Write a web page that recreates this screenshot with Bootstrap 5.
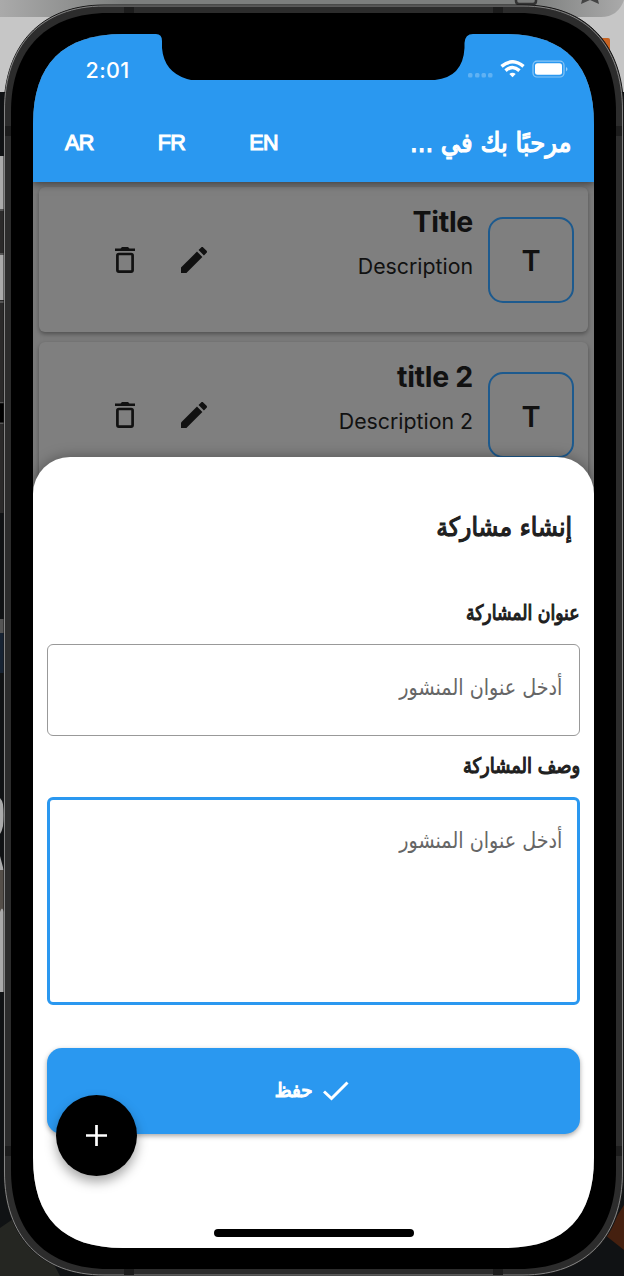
<!DOCTYPE html>
<html lang="ar" dir="rtl">
<head>
<meta charset="utf-8">
<meta name="viewport" content="width=device-width, initial-scale=1">
<title>إنشاء مشاركة</title>
<link href="https://cdn.jsdelivr.net/npm/bootstrap@5.3.0/dist/css/bootstrap.min.css" rel="stylesheet">
<style>
:root{--blue:#2a98f0}
body{width:624px;height:1276px;overflow:hidden;background:#101214;font-family:Inter,"DejaVu Sans",sans-serif;color:#111}
svg{display:block;flex:none}
.device{width:624px;height:1276px;padding:34px 30px 28px 33px}
.device-art{position:absolute;left:0;top:0}
.screen{width:561px;height:1214px;background:#7a7a7a;clip-path:url(#screenShape)}
.app-top{height:148px;background:var(--blue);box-shadow:0 2px 8px rgba(0,0,0,.5);z-index:1}
.notch{position:absolute;left:118px;top:0;z-index:3}
.status{height:72px;padding:0 25px 0 52.500px}
.clock{font-size:21.500px;font-weight:500;letter-spacing:.4px;line-height:72px}
.app-row{padding:17px 22px 0 32px}
.lang{font:21.500px/30px "Liberation Sans",sans-serif;-webkit-text-stroke:1.100px #fff;letter-spacing:-.6px}
.ar{font-family:"DejaVu Sans",sans-serif;white-space:nowrap;-webkit-text-stroke:1.200px currentColor}
.ar span,.field span,span.ar{display:inline-block;transform-origin:right center}
.brand-text{font-size:27px;line-height:40px}
.brand-text span{transform:scaleX(.9)}
.post{width:549px;height:145px;background:#7f7f7f;border-radius:6px;box-shadow:0 2px 4px rgba(0,0,0,.35);margin:0 6px 10.400px;padding-right:14px}
.avatar-box{width:86px;height:86px;border:2px solid #1d5a8e;border-radius:15px;font-size:29px;font-weight:600;margin-top:30px;padding-top:2px}
.post-copy{flex:1;padding:17.500px 15px 0 0;text-align:right}
.post-title{font-size:28.500px;line-height:34px;font-weight:700;letter-spacing:-.3px}
.post-desc{font-size:21.300px;line-height:28px;margin-top:13.500px}
.post-tools{order:3;gap:46px;padding:60px 0 0 76px;width:280px;flex:none}
.sheet{position:absolute;left:0;right:0;top:423px;bottom:0;background:#fff;border-radius:37px 37px 0 0;padding:0 14px;box-shadow:0 0 14px rgba(0,0,0,.35);z-index:2;color:#202020}
.sheet-title{font-size:26px;line-height:40px;padding:50px 8px 0 0}
.sheet-title span{transform:scaleX(.905)}
.field-label{font-size:21px;line-height:30px;margin-top:15px}
.field-label span{transform:scaleX(.855)}
.sheet-title + .field-label{margin-top:51px}
.sheet-title + .field-label span{transform:scaleX(.82)}
.field{border:1.500px solid #999;border-radius:6px;height:92px;padding:0 17px;font:22px/86px "DejaVu Sans",sans-serif;color:#666;background:#fff;margin-top:16px}
.field span{transform:scaleX(.87)}
.field-active{border:3px solid var(--blue);height:208px;padding:0 15px;line-height:82px}
.save{height:86px;border-radius:15px;background:var(--blue)!important;border:0;color:#fff!important;box-shadow:0 2px 5px rgba(0,0,0,.35);margin-top:43px;padding:0 7px 3px 0}
.save svg{margin-top:3px}
.save .ar{font-size:20px;margin-right:11px;transform:scaleX(.91)}
.fab{position:absolute;left:23px;top:1061px;width:81px;height:81px;background:#000!important;box-shadow:0 6px 12px rgba(0,0,0,.35);z-index:4}
.home-bar{position:absolute;left:181px;top:1195px;width:200px;height:7.500px;border-radius:4px;background:#000;z-index:4}
</style>
</head>
<body>
<div class="device position-relative">
<svg class="device-art" width="624" height="1276" viewBox="0 0 624 1276" aria-hidden="true">
<defs>
<linearGradient id="g" x2="1"><stop stop-color="#aaa"/><stop offset=".2" stop-color="#7c7e7d"/><stop offset=".85" stop-color="#7c7e7d"/><stop offset="1" stop-color="#aaa"/></linearGradient>
<clipPath id="screenShape"><path d="M0 90C0 30 30 0 90 0H471C531 0 561 30 561 90V1124C561 1184 531 1214 471 1214H90C30 1214 0 1184 0 1124Z"/></clipPath>
</defs>
<rect width="624" height="92" fill="#c6c6c6"/><path d="M0 0H624Q618 17 601 17H0Z" fill="url(#g)"/>
<path d="M516 0V1Q516 4 519 4H533Q536 4 536 1V0" fill="none" stroke="#333" stroke-width="2.500"/><path d="M582 0L581 4L590 0L599 4L598 0Z" fill="#444"/>
<rect x="600" y="38" width="10" height="15" rx="2" fill="#c86423"/>
<path d="M0 156h6v53H0zM0 255h6v45H0z" fill="#aaa"/><path d="M0 209h6v46H0zM0 300h6v213H0z" fill="#2b2a2a"/><path d="M0 209h5v2H0zM0 253h5v2H0zM0 301h5v2H0zM0 402h5v1H0zM0 422h5v2H0z" fill="#555"/><path d="M0 403.500h4v19H0z" fill="#000"/>
<path d="M0 619h4v14H0z" fill="#555"/><path d="M0 633h4v40H0z" fill="#172333"/><path d="M0 798Q4 802 4 815Q4 828 0 834ZM0 856l4 15v121H0z" fill="#aaa"/><path d="M0 870h4v42Q2 905 0 912z" fill="#554f49"/>
<path d="M0 1228L26 1210L60 1276H0Z" fill="#252622"/><path d="M624 1205L605 1235L624 1250Z" fill="#45200f"/>
<path d="M620 132h4v182h-4z" fill="#777"/><path d="M620 314h4v800h-4z" fill="#444"/>
<path d="M4 110C4 45 41 5 104 5H523C587 5 623.500 45 623.500 110V1172C623.500 1237 587 1275.500 523 1275.500H104C41 1275.500 4 1237 4 1172Z" fill="#2c2c2c" stroke="#161616"/>
<path d="M4.500 110C4.500 46 41 6 104 6H523C586 6 622.500 46 622.500 110V1172C622.500 1236 586 1275 523 1275H104C41 1275 4.500 1236 4.500 1172Z" fill="none" stroke="#858585"/>
<path d="M124 7h10v6h-10zM493 7h10v6h-10zM124 1269h10v6h-10zM493 1269h10v6h-10zM5 126h6v10H5zM616 126h6v10h-6zM5 1146h6v10H5zM616 1146h6v10h-6z" fill="#1c1c1c"/>
<path d="M11 112C11 48 48 13 108 13H519C580 13 616 48 616 112V1170C616 1234 580 1269 519 1269H108C48 1269 11 1234 11 1170Z"/>
</svg>
<main class="screen position-relative">
<header class="app-top position-relative text-white">
<div class="status d-flex justify-content-between align-items-center" dir="ltr">
<span class="clock">2:01</span>
<svg width="101" height="20" viewBox="0 0 101 20" fill="#fff"><g opacity=".25"><rect y="13" width="4.500" height="4.500" rx="1.500"/><rect x="7" y="13" width="4.500" height="4.500" rx="1.500"/><rect x="13.500" y="13" width="4.500" height="4.500" rx="1.500"/><rect x="20" y="13" width="4.500" height="4.500" rx="1.500"/></g><g fill="none" stroke="#fff" stroke-width="3.500"><path d="M33.500 6.400Q44.500-2.800 55.500 6.400M37.500 10.600Q44.500 4.500 51.500 10.600"/></g><path d="M41.300 14Q44.500 11.400 47.700 14L44.500 17.300Z"/><rect x="65" y="1.200" width="31" height="15.800" rx="4" fill="none" stroke="#fff" stroke-opacity=".45" stroke-width="1.200"/><rect x="67" y="3.200" width="27" height="11.600" rx="2.500"/><path d="M98 7Q101 9 98 11.500Z" opacity=".5"/></svg>
</div>
<div class="app-row d-flex justify-content-between align-items-center" dir="ltr">
<nav class="d-flex" style="gap:64px"><span class="lang">AR</span><span class="lang">FR</span><span class="lang">EN</span></nav>
<div class="ar brand-text" dir="rtl"><span>مرحبًا بك في ...</span></div>
</div>
</header>
<svg class="notch" width="326" height="46" viewBox="0 0 326 46"><path d="M0 0H5Q11 0 11 7V14Q13 38 36 45L40 46H284Q312 43 313.500 14V9Q314 0 322 0Z"/></svg>
<section style="padding-top:5px">
<article class="post d-flex">
<div class="avatar-box d-flex align-items-center justify-content-center">T</div>
<div class="post-copy" dir="ltr"><div class="post-title">Title</div><div class="post-desc">Description</div></div>
<div class="post-tools d-flex align-items-start" dir="ltr"><svg width="20" height="26" fill="#111"><path d="M0 1.500H5.500L7 0H13L14.500 1.500H20V4H0Z"/><rect x="2.400" y="7" width="15.200" height="17.600" rx="1.500" fill="none" stroke="#111" stroke-width="2.700"/></svg><svg width="26" height="26" viewBox="3 3 18 18" fill="#111"><path d="M3 17.250V21H6.750L17.810 9.940L14.060 6.190Z"/><path d="M20.710 7.040C21.100 6.650 21.100 6.020 20.710 5.630L18.370 3.290C17.980 2.900 17.350 2.900 16.960 3.290L15.130 5.120L18.880 8.870Z"/></svg></div>
</article>
<article class="post d-flex">
<div class="avatar-box d-flex align-items-center justify-content-center">T</div>
<div class="post-copy" dir="ltr"><div class="post-title">title 2</div><div class="post-desc">Description 2</div></div>
<div class="post-tools d-flex align-items-start" dir="ltr"><svg width="20" height="26" fill="#111"><path d="M0 1.500H5.500L7 0H13L14.500 1.500H20V4H0Z"/><rect x="2.400" y="7" width="15.200" height="17.600" rx="1.500" fill="none" stroke="#111" stroke-width="2.700"/></svg><svg width="26" height="26" viewBox="3 3 18 18" fill="#111"><path d="M3 17.250V21H6.750L17.810 9.940L14.060 6.190Z"/><path d="M20.710 7.040C21.100 6.650 21.100 6.020 20.710 5.630L18.370 3.290C17.980 2.900 17.350 2.900 16.960 3.290L15.130 5.120L18.880 8.870Z"/></svg></div>
</article>
</section>
<form class="sheet">
<h1 class="ar sheet-title mb-0 fw-normal"><span>إنشاء مشاركة</span></h1>
<div class="ar field-label"><span>عنوان المشاركة</span></div>
<div class="field"><span>أدخل عنوان المنشور</span></div>
<div class="ar field-label"><span>وصف المشاركة</span></div>
<div class="field field-active"><span>أدخل عنوان المنشور</span></div>
<button type="button" class="save btn w-100 d-flex align-items-center justify-content-center"><svg width="26" height="20" fill="none" stroke="#fff" stroke-width="3"><path d="M1 10.500L8.500 17.500L24.500 1.500"/></svg><span class="ar">حفظ</span></button>
</form>
<button class="fab btn rounded-circle p-0 d-flex align-items-center justify-content-center" aria-label="add"><svg width="21" height="21" stroke="#fff" stroke-width="2.700"><path d="M0 10.500H21M10.500 0V21"/></svg></button>
<div class="home-bar"></div>
</main>
</div>
<script src="https://cdn.jsdelivr.net/npm/bootstrap@5.3.0/dist/js/bootstrap.bundle.min.js"></script>
</body>
</html>
